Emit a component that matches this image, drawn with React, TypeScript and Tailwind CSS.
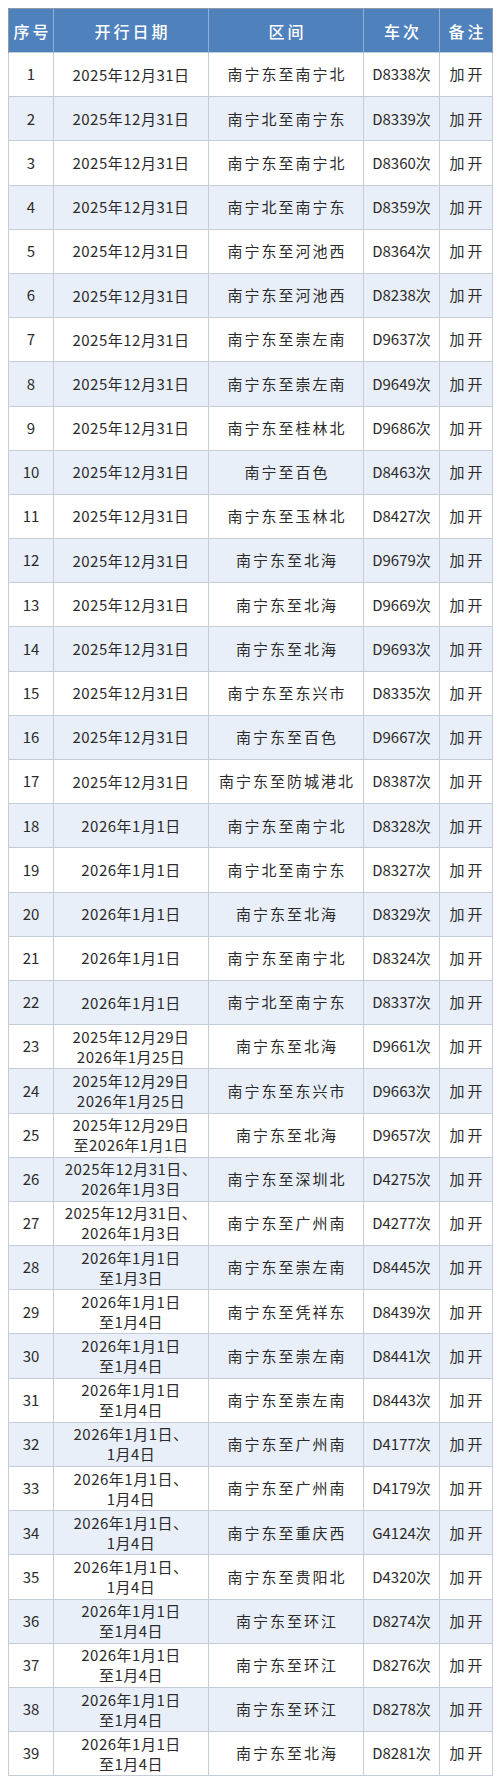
import React from 'react';

interface TrainRow {
  date: string[];
  route: string;
  train: string;
}

const rows: TrainRow[] = [
  { date: ['2025年12月31日'], route: '南宁东至南宁北', train: 'D8338次' },
  { date: ['2025年12月31日'], route: '南宁北至南宁东', train: 'D8339次' },
  { date: ['2025年12月31日'], route: '南宁东至南宁北', train: 'D8360次' },
  { date: ['2025年12月31日'], route: '南宁北至南宁东', train: 'D8359次' },
  { date: ['2025年12月31日'], route: '南宁东至河池西', train: 'D8364次' },
  { date: ['2025年12月31日'], route: '南宁东至河池西', train: 'D8238次' },
  { date: ['2025年12月31日'], route: '南宁东至崇左南', train: 'D9637次' },
  { date: ['2025年12月31日'], route: '南宁东至崇左南', train: 'D9649次' },
  { date: ['2025年12月31日'], route: '南宁东至桂林北', train: 'D9686次' },
  { date: ['2025年12月31日'], route: '南宁至百色', train: 'D8463次' },
  { date: ['2025年12月31日'], route: '南宁东至玉林北', train: 'D8427次' },
  { date: ['2025年12月31日'], route: '南宁东至北海', train: 'D9679次' },
  { date: ['2025年12月31日'], route: '南宁东至北海', train: 'D9669次' },
  { date: ['2025年12月31日'], route: '南宁东至北海', train: 'D9693次' },
  { date: ['2025年12月31日'], route: '南宁东至东兴市', train: 'D8335次' },
  { date: ['2025年12月31日'], route: '南宁东至百色', train: 'D9667次' },
  { date: ['2025年12月31日'], route: '南宁东至防城港北', train: 'D8387次' },
  { date: ['2026年1月1日'], route: '南宁东至南宁北', train: 'D8328次' },
  { date: ['2026年1月1日'], route: '南宁北至南宁东', train: 'D8327次' },
  { date: ['2026年1月1日'], route: '南宁东至北海', train: 'D8329次' },
  { date: ['2026年1月1日'], route: '南宁东至南宁北', train: 'D8324次' },
  { date: ['2026年1月1日'], route: '南宁北至南宁东', train: 'D8337次' },
  { date: ['2025年12月29日', '2026年1月25日'], route: '南宁东至北海', train: 'D9661次' },
  { date: ['2025年12月29日', '2026年1月25日'], route: '南宁东至东兴市', train: 'D9663次' },
  { date: ['2025年12月29日', '至2026年1月1日'], route: '南宁东至北海', train: 'D9657次' },
  { date: ['2025年12月31日、', '2026年1月3日'], route: '南宁东至深圳北', train: 'D4275次' },
  { date: ['2025年12月31日、', '2026年1月3日'], route: '南宁东至广州南', train: 'D4277次' },
  { date: ['2026年1月1日', '至1月3日'], route: '南宁东至崇左南', train: 'D8445次' },
  { date: ['2026年1月1日', '至1月4日'], route: '南宁东至凭祥东', train: 'D8439次' },
  { date: ['2026年1月1日', '至1月4日'], route: '南宁东至崇左南', train: 'D8441次' },
  { date: ['2026年1月1日', '至1月4日'], route: '南宁东至崇左南', train: 'D8443次' },
  { date: ['2026年1月1日、', '1月4日'], route: '南宁东至广州南', train: 'D4177次' },
  { date: ['2026年1月1日、', '1月4日'], route: '南宁东至广州南', train: 'D4179次' },
  { date: ['2026年1月1日、', '1月4日'], route: '南宁东至重庆西', train: 'G4124次' },
  { date: ['2026年1月1日、', '1月4日'], route: '南宁东至贵阳北', train: 'D4320次' },
  { date: ['2026年1月1日', '至1月4日'], route: '南宁东至环江', train: 'D8274次' },
  { date: ['2026年1月1日', '至1月4日'], route: '南宁东至环江', train: 'D8276次' },
  { date: ['2026年1月1日', '至1月4日'], route: '南宁东至环江', train: 'D8278次' },
  { date: ['2026年1月1日', '至1月4日'], route: '南宁东至北海', train: 'D8281次' },
];

const font = 'font-["Noto_Sans_CJK_SC","Noto_Sans",sans-serif]';

export default function App() {
  return (
    <div className={`min-h-[1782px] bg-white pt-2 pl-2 ${font}`}>
      <table className="w-[484px] table-fixed border-collapse border border-[#8e99a8] text-[15px] text-[#2b2b2b]">
        <colgroup>
          <col className="w-[45px]" />
          <col className="w-[155px]" />
          <col className="w-[155px]" />
          <col className="w-[76px]" />
          <col className="w-[53px]" />
        </colgroup>
        <thead>
          <tr className="h-[44px] bg-[#4f81bd] text-[16px] text-white">
            {['序号', '开行日期', '区间', '车次', '备注'].map((h) => (
              <th
                key={h}
                className="border-x border-[#8fb0d8] p-0 pl-[3px] text-center font-medium tracking-[3px] first:border-l-[#8e99a8] last:border-r-[#8e99a8]"
              >
                {h}
              </th>
            ))}
          </tr>
        </thead>
        <tbody>
          {rows.map((r, i) => (
            <tr key={i} className={`h-[44.2px] ${i % 2 === 1 ? 'bg-[#e9eff8]' : 'bg-white'}`}>
              <td className="border border-[#c3ccd8] p-0 text-center">{i + 1}</td>
              <td className="border border-[#c3ccd8] p-0 text-center leading-[20px] tracking-[0.5px]">
                {r.date.map((d) => (
                  <div key={d}>{d}</div>
                ))}
              </td>
              <td className="border border-[#c3ccd8] p-0 pl-[2px] text-center tracking-[2px]">{r.route}</td>
              <td className="border border-[#c3ccd8] p-0 text-center">{r.train}</td>
              <td className="border border-[#c3ccd8] p-0 pl-[3px] text-center tracking-[3px]">加开</td>
            </tr>
          ))}
        </tbody>
      </table>
    </div>
  );
}
